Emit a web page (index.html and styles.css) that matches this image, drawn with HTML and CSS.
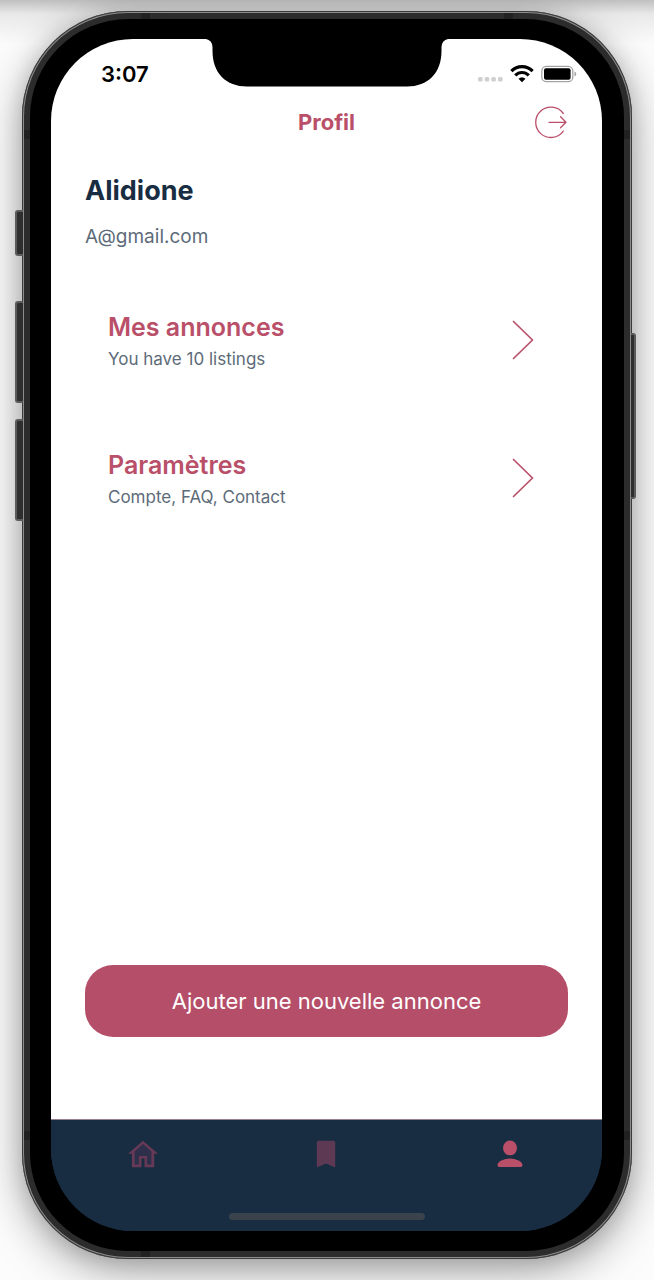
FILE: index.html
```html
<!DOCTYPE html>
<html lang="fr">
<head>
<meta charset="utf-8">
<meta name="viewport" content="width=device-width, initial-scale=1">
<title>Profil</title>
<link rel="stylesheet" href="styles.css">
</head>
<body>
<div class="phone">
  <span class="side-key key-mute"></span>
  <span class="side-key key-up"></span>
  <span class="side-key key-down"></span>
  <span class="side-key key-power"></span>
  <span class="band band-top band-start"></span>
  <span class="band band-top band-end"></span>
  <span class="band band-bottom band-start"></span>
  <span class="band band-left band-high"></span>
  <span class="band band-left band-low"></span>
  <span class="band band-right band-high"></span>
  <span class="band band-right band-low"></span>
  <div class="bezel">
    <div class="screen">
      <svg class="notch" viewBox="0 0 246 48" width="246" height="48" aria-hidden="true"><path d="M0 0H2Q8 1 8.500 8V12C8.500 34 22 47.500 43 47.500H203C224 47.500 237.500 34 237.500 12V8Q238 1 244 0H246Z" fill="#000"/></svg>
      <div class="status">
        <span class="time">3:07</span>
        <div class="status-icons">
          <svg width="26" height="6" viewBox="0 0 26 6" fill="#cfcfcf" aria-hidden="true"><rect x="1" y="1" width="4.600" height="4.600" rx="1.500"/><rect x="7.700" y="1" width="4.600" height="4.600" rx="1.500"/><rect x="14.300" y="1" width="4.600" height="4.600" rx="1.500"/><rect x="21" y="1" width="4.600" height="4.600" rx="1.500"/></svg>
          <svg width="24" height="18" viewBox="0 0 24 18" fill="none" stroke="#000" stroke-width="3.200" aria-hidden="true"><path d="M1.400 6.200C7.400 .2 16.600 .2 22.600 6.200"/><path d="M5.200 10.400C9.200 6.500 14.800 6.500 18.800 10.400"/><path d="M12 17.200L8.500 13.800Q12 10.800 15.500 13.800Z" fill="#000" stroke="none"/></svg>
          <svg width="36" height="18" viewBox="0 0 36 18" aria-hidden="true"><rect x=".8" y="1.300" width="31" height="15.400" rx="4.500" fill="none" stroke="#a3a3a3" stroke-width="1.300"/><rect x="3" y="3.300" width="26.600" height="11.400" rx="2" fill="#000"/><path d="M33.500 6.500Q35.300 7.300 35.300 9T33.500 11.500Z" fill="#a3a3a3"/></svg>
        </div>
      </div>
      <header class="header">
        <h1 class="title">Profil</h1>
        <button class="logout" type="button" aria-label="Déconnexion">
          <svg width="34" height="34" viewBox="0 0 34 34" fill="none" stroke="#b94f69" stroke-width="1.300" stroke-linecap="round" stroke-linejoin="round" aria-hidden="true"><path d="M29.300 8.500A15.200 15.200 0 1 0 29.300 26.100"/><path d="M15 17.300H32M26.500 11.800L32 17.300L26.500 22.800"/></svg>
        </button>
      </header>
      <main class="content">
        <h2 class="name">Alidione</h2>
        <p class="email">A@gmail.com</p>
        <nav class="menu" aria-label="Profil">
          <a class="entry" href="#annonces">
            <span class="entry-text"><span class="entry-title">Mes annonces</span><span class="entry-note">You have 10 listings</span></span>
            <svg width="22" height="40" viewBox="0 0 22 40" fill="none" stroke="#b94f69" stroke-width="1.700" stroke-linecap="round" stroke-linejoin="round" aria-hidden="true"><path d="M1.500 1.500L20.500 20L1.500 38.500"/></svg>
          </a>
          <a class="entry" href="#parametres">
            <span class="entry-text"><span class="entry-title">Paramètres</span><span class="entry-note">Compte, FAQ, Contact</span></span>
            <svg width="22" height="40" viewBox="0 0 22 40" fill="none" stroke="#b94f69" stroke-width="1.700" stroke-linecap="round" stroke-linejoin="round" aria-hidden="true"><path d="M1.500 1.500L20.500 20L1.500 38.500"/></svg>
          </a>
        </nav>
        <button class="add" type="button">Ajouter une nouvelle annonce</button>
      </main>
      <nav class="tabs" aria-label="Navigation">
        <a class="tab" href="#accueil" aria-label="Accueil"><svg width="32" height="28" viewBox="0 0 32 28" aria-hidden="true"><path d="M16 2L4 12.500H6.500V26H13V17H19V26H25.500V12.500H28Z" fill="#2d2f4b"/><path fill="#663a57" fill-rule="evenodd" d="M16 .7L31 13.800H27.200V27.200H17.500V18.500H14.500V27.200H4.900V13.800H1ZM16 4L7.600 11.400V24.500H11.900V15.900H20.100V24.500H24.400V11.400Z"/></svg></a>
        <a class="tab" href="#favoris" aria-label="Favoris"><svg width="32" height="28" viewBox="0 0 32 28" aria-hidden="true"><path d="M8.500 .8H23.500Q25.200 .8 25.200 2.500V27.500L16 23.600L6.800 27.500V2.500Q6.800 .8 8.500 .8Z" fill="#5e3954"/></svg></a>
        <a class="tab" href="#profil" aria-label="Profil" aria-current="page"><svg width="32" height="28" viewBox="0 0 32 28" fill="#b94f69" aria-hidden="true"><ellipse cx="16" cy="7.900" rx="7" ry="7.400"/><path d="M3.500 25Q3.500 22.500 7.500 20.500Q11.500 18.500 16 18.500T24.500 20.500Q28.500 22.500 28.500 25Q28.500 26.900 26.800 26.900H5.200Q3.500 26.900 3.500 25Z"/></svg></a>
        <span class="home-bar"></span>
      </nav>
    </div>
  </div>
</div>
</body>
</html>
```
FILE: styles.css
```css
* { box-sizing: border-box; }

body {
  margin: 0;
  min-height: 100vh;
  padding: 11px 22px 21px;
  display: flex;
  overflow-x: hidden;
  background:
    linear-gradient(rgba(0, 0, 0, 0.24), rgba(0, 0, 0, 0.08) 14px, rgba(0, 0, 0, 0) 44px),
    #fcfcfc;
  font-family: Inter, "Noto Sans", sans-serif;
}

h1, h2, p { margin: 0; }

.phone {
  position: relative;
  flex: 1;
  display: flex;
  padding: 8px;
  border-radius: 106px;
  background: #2c2c2c;
  box-shadow:
    inset 0 0 0 1px #3a3a3a,
    inset 0 0 0 2px #8c8c8c,
    0 2px 20px rgba(0, 0, 0, 0.12),
    0 12px 44px rgba(0, 0, 0, 0.36);
}

.side-key {
  position: absolute;
  width: 8px;
  background: #2e2e2e;
  border: 2px solid #5b5b5b;
  border-right: 0;
  border-radius: 3px 0 0 3px;
  left: -7px;
}
.key-mute { top: 199px; height: 46px; }
.key-up { top: 290px; height: 102px; }
.key-down { top: 408px; height: 102px; }
.key-power {
  top: 322px;
  height: 166px;
  left: auto;
  right: -4px;
  width: 5px;
  border: 2px solid #5b5b5b;
  border-left: 0;
  border-radius: 0 3px 3px 0;
}

.band { position: absolute; background: #212121; }
.band-top, .band-bottom { width: 9px; height: 6px; }
.band-left, .band-right { width: 6px; height: 9px; }
.band-top { top: 2px; }
.band-bottom { bottom: 2px; }
.band-left { left: 2px; }
.band-right { right: 2px; }
.band-start { left: 119px; }
.band-end { right: 119px; }
.band-high { top: 119px; }
.band-low { bottom: 119px; }

.bezel {
  position: relative;
  flex: 1;
  display: flex;
  padding: 20px 22px 20px 21px;
  border-radius: 98px;
  background: #000;
}

.screen {
  position: relative;
  flex: 1;
  display: flex;
  flex-direction: column;
  overflow: hidden;
  border-radius: 82px;
  background: linear-gradient(to top, #182c42 100px, #fff 100px);
}

.notch {
  position: absolute;
  top: 0;
  left: 50%;
  transform: translateX(-50%);
}

.status {
  display: flex;
  align-items: center;
  justify-content: space-between;
  height: 58px;
  padding: 12px 25px 0 50px;
}
.time {
  font-size: 22px;
  line-height: 28px;
  font-weight: 600;
  color: #000;
}
.status-icons { display: flex; align-items: center; gap: 7px; }
.status-icons svg:first-child { margin-top: 10px; }

.header {
  display: grid;
  grid-template-columns: 1fr auto 1fr;
  align-items: center;
  height: 50px;
  padding: 0 34px;
}
.title {
  grid-column: 2;
  font-size: 22px;
  line-height: 28px;
  font-weight: 700;
  color: #b94f69;
}
.logout {
  justify-self: end;
  display: flex;
  padding: 0;
  border: 0;
  background: none;
}

.content {
  flex: 1;
  display: flex;
  flex-direction: column;
  padding: 24px 34px 82px;
}
.name {
  font-size: 27px;
  line-height: 40px;
  font-weight: 700;
  color: #182c42;
}
.email {
  margin-top: 12px;
  font-size: 19px;
  line-height: 28px;
  color: #5d6b79;
}
.menu { margin-top: 20px; }
.entry {
  display: flex;
  align-items: center;
  justify-content: space-between;
  padding: 38px 34px 38px 23px;
  text-decoration: none;
}
.entry-text { display: flex; flex-direction: column; gap: 4px; padding-top: 2px; }
.entry-title {
  font-size: 25px;
  line-height: 32px;
  font-weight: 600;
  color: #b94f69;
}
.entry-note {
  font-size: 17px;
  line-height: 24px;
  color: #5d6b79;
}
.add {
  margin-top: auto;
  height: 72px;
  border: 0;
  border-radius: 28px;
  background: #b54e68;
  color: #fff;
  font-family: inherit;
  font-size: 22px;
  line-height: 28px;
}

.tabs {
  position: relative;
  display: grid;
  grid-template-columns: repeat(3, 1fr);
  height: 112px;
  padding-top: 20px;
  border-top: 1px solid #927f90;
  background: #182c42;
}
.tab { display: flex; justify-content: center; align-items: flex-start; }
.home-bar {
  position: absolute;
  bottom: 11px;
  left: 50%;
  transform: translateX(-50%);
  width: 196px;
  height: 7px;
  border-radius: 4px;
  background: #3a424b;
}
```
